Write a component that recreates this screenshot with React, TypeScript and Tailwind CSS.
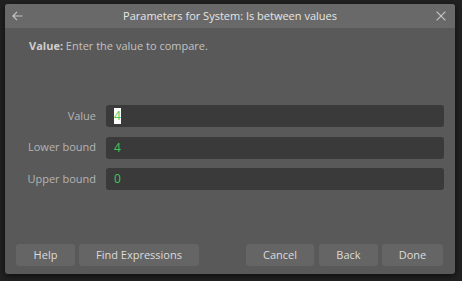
import React from "react";

const font = { fontFamily: '"Open Sans", "Noto Sans", sans-serif' };

function Field({ label, value, selected }: { label: string; value: string; selected?: boolean }) {
  return (
    <div className="flex h-[22px] items-center">
      <div className="w-[90px] pr-[10px] text-right text-[11px] text-[#b4b4b4]">{label}</div>
      <div className="flex h-full flex-1 items-center rounded-[3px] bg-[#3a3a3a] pl-[8px] text-[12px] text-[#40c85c]">
        {selected ? <span className="bg-white leading-[16px]">{value}</span> : value}
      </div>
    </div>
  );
}

function Btn({ children, w }: { children: React.ReactNode; w: string }) {
  return (
    <button className={`${w} h-[22px] rounded-[3px] bg-[#656565] text-[11px] text-[#dcdcdc]`}>{children}</button>
  );
}

export default function App() {
  return (
    <div className="h-[281px] w-[462px] bg-[#212121] pl-[5px] pt-[4px]" style={font}>
      <div className="flex h-[270px] w-[450px] flex-col overflow-hidden rounded-[3px] bg-[#595959] shadow-[0_2px_6px_rgba(0,0,0,0.6)]">
        {/* Header */}
        <div className="relative flex h-[24px] items-center justify-center bg-[#696969]">
          <svg className="absolute left-[7px] top-[7px]" width="11" height="10" viewBox="0 0 11 10" fill="none" stroke="#c4c4c4" strokeWidth="1.2">
            <path d="M10.5 5H1M5 0.8 0.9 5 5 9.2" />
          </svg>
          <span className="text-[11px] text-[#e6e6e6]">Parameters for System: Is between values</span>
          <svg className="absolute right-[9px] top-[7px]" width="10" height="10" viewBox="0 0 10 10" fill="none" stroke="#c4c4c4" strokeWidth="1.2">
            <path d="M0.6 0.6 9.4 9.4M9.4 0.6 0.6 9.4" />
          </svg>
        </div>

        {/* Body */}
        <div className="flex flex-1 flex-col px-[11px] pb-[8px]">
          <div className="ml-[13px] mt-[10px] text-[11px] leading-[16px] text-[#c2c2c2]">
            <span className="font-bold text-[#cfcfcf]">Value:</span> Enter the value to compare.
          </div>

          <div className="mt-[51px] flex flex-col gap-[9.5px]">
            <Field label="Value" value="4" selected />
            <Field label="Lower bound" value="4" />
            <Field label="Upper bound" value="0" />
          </div>

          <div className="mt-auto flex">
            <Btn w="w-[59px]">Help</Btn>
            <div className="w-[4px]" />
            <Btn w="w-[120px]">Find Expressions</Btn>
            <div className="flex-1" />
            <Btn w="w-[68px]">Cancel</Btn>
            <div className="w-[5px]" />
            <Btn w="w-[59px]">Back</Btn>
            <div className="w-[4px]" />
            <Btn w="w-[61px]">Done</Btn>
            <div className="w-[1px]" />
          </div>
        </div>
      </div>
    </div>
  );
}
